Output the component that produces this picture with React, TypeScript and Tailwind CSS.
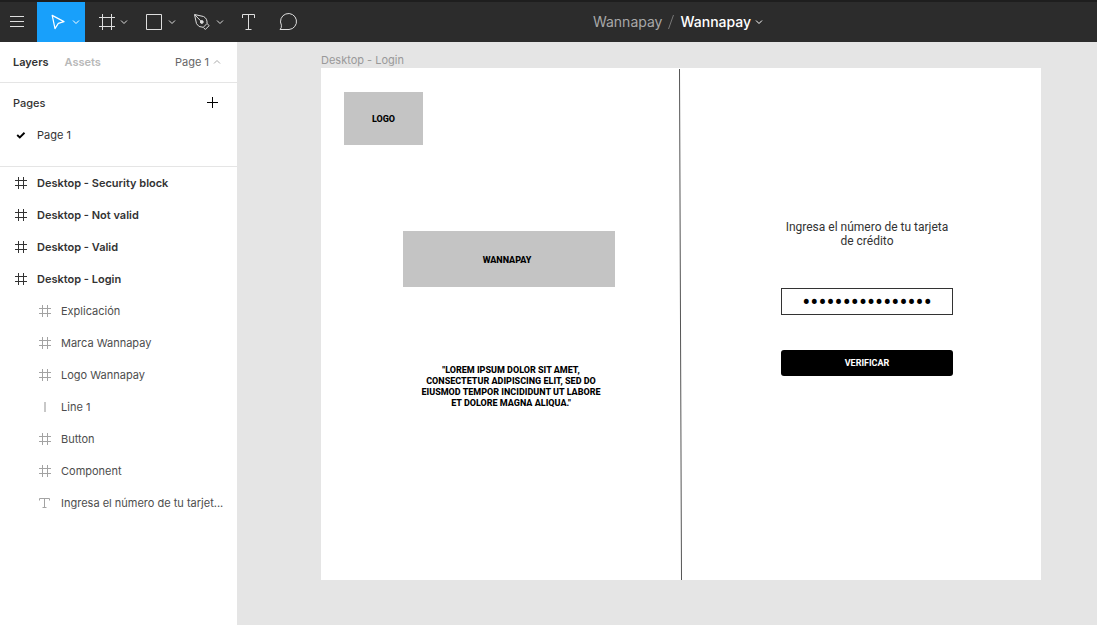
import type { ReactNode } from "react";

function Svg({ size, className = "", children }: { size: number; className?: string; children: ReactNode }) {
  return (
    <svg width={size} height={size} viewBox={`0 0 ${size} ${size}`} fill="none" stroke="currentColor" className={`shrink-0 ${className}`} aria-hidden="true">
      {children}
    </svg>
  );
}

function Chevron({ up = false, className = "" }: { up?: boolean; className?: string }) {
  return (
    <svg width="8" height="6" viewBox="0 0 8 6" fill="none" stroke="currentColor" className={`shrink-0 ${className}`} aria-hidden="true">
      <path d={up ? "M1 4.5 4 1.5 7 4.5" : "M1 1.5 4 4.5 7 1.5"} />
    </svg>
  );
}

const MoveIcon = () => (
  <Svg size={18}>
    <path d="M3.2 2.4 15 8.6 9.3 10.4 6 15.6Z" strokeWidth="1.2" strokeLinejoin="round" />
  </Svg>
);
const FrameIcon = () => (
  <Svg size={18}>
    <path d="M5.5 1v16M14.5 1v16M2 4.5h16M2 13.5h16" />
  </Svg>
);
const RectIcon = () => (
  <Svg size={18}>
    <path d="M1.5 1.5h15v15h-15z" />
  </Svg>
);
const PenIcon = () => (
  <Svg size={18}>
    <path d="M1.5 1.5 10.5 3.5Q14.5 5.5 14 10.5L10.3 14.3Q5.3 14.5 3.5 10.7ZM2 2l5.8 6M14.2 10.8l2 1.8-3.9 3.9-1.8-2" strokeLinejoin="round" />
    <circle cx="8.8" cy="9" r="1.4" fill="currentColor" />
  </Svg>
);
const TextIcon = () => (
  <Svg size={18}>
    <path d="M3.5 5V1.5h12V5M9.5 1.5v15M6.5 16.5h6" />
  </Svg>
);
const CommentIcon = () => (
  <Svg size={20}>
    <path d="M2 17.5Q3.8 16 3.4 13.2A8 8 0 1 1 11 17.5Z" strokeLinejoin="round" />
  </Svg>
);

function Tool({ label, active = false, children }: { label: string; active?: boolean; children: ReactNode }) {
  return (
    <button type="button" aria-label={label} className={`flex w-12 items-center gap-[5px] pl-3 ${active ? "bg-[#18a0fb] text-white" : "text-[#dedede]"}`}>
      {children}
      <Chevron />
    </button>
  );
}

function Toolbar() {
  return (
    <header className="flex h-[42px] shrink-0 border-t-2 border-[#1e1e1e] bg-[#2c2c2c] text-[#dedede]">
      <button type="button" aria-label="Main menu" className="flex w-[37px] items-center pl-2">
        <Svg size={18}>
          <path d="M2 3.5h14M2 8.5h14M2 13.5h14" />
        </Svg>
      </button>
      <Tool label="Move" active><MoveIcon /></Tool>
      <Tool label="Frame"><FrameIcon /></Tool>
      <Tool label="Rectangle"><RectIcon /></Tool>
      <Tool label="Pen"><PenIcon /></Tool>
      <button type="button" aria-label="Text" className="flex w-10 items-center pl-2.5"><TextIcon /></button>
      <button type="button" aria-label="Comment" className="flex w-10 items-center pl-[9px]"><CommentIcon /></button>
      <div className="flex flex-1 items-center justify-center pr-[50px] text-sm">
        <a href="#project" className="text-[#a8a8a8]">Wannapay</a>
        <Svg size={18} className="text-[#777777]">
          <path d="M6.5 16 11.5 2" />
        </Svg>
        <button type="button" className="flex items-center gap-1 font-medium text-white">
          Wannapay
          <Chevron />
        </button>
      </div>
    </header>
  );
}

type Kind = "frame" | "line" | "text";

function LayerIcon({ kind }: { kind: Kind }) {
  return (
    <Svg size={12}>
      {kind === "frame" && <path d="M3.5 0v12M8.5 0v12M0 3.5h12M0 8.5h12" />}
      {kind === "line" && <path d="M6 1v10" strokeWidth="2" opacity="0.6" />}
      {kind === "text" && <path d="M.5 3.5v-2h10v2M5.5 1.5v9M3.5 10.5h4" />}
    </Svg>
  );
}

const frames = ["Desktop - Security block", "Desktop - Not valid", "Desktop - Valid", "Desktop - Login"];
const children: { name: string; kind: Kind }[] = [
  { name: "Explicación", kind: "frame" },
  { name: "Marca Wannapay", kind: "frame" },
  { name: "Logo Wannapay", kind: "frame" },
  { name: "Line 1", kind: "line" },
  { name: "Button", kind: "frame" },
  { name: "Component", kind: "frame" },
  { name: "Ingresa el número de tu tarjet...", kind: "text" },
];

function Sidebar() {
  return (
    <aside className="flex w-[238px] shrink-0 flex-col border-r border-[#e5e5e5] bg-white text-[11px] leading-4 text-[#333333]">
      <div className="flex h-[41px] items-center gap-4 border-b border-[#e5e5e5] pr-4 pl-[13px]">
        <button type="button" className="font-semibold">Layers</button>
        <button type="button" className="font-semibold text-[#b8b8b8]">Assets</button>
        <button type="button" className="ml-auto flex items-center gap-1 text-[#666666]">
          Page 1
          <Chevron up className="text-[#aaaaaa]" />
        </button>
      </div>
      <section className="h-[84px] border-b border-[#e5e5e5] pt-1">
        <div className="flex h-8 items-center justify-between pr-[18px] pl-[13px]">
          <h2 className="font-medium">Pages</h2>
          <button type="button" aria-label="Add page" className="text-black">
            <Svg size={13}>
              <path d="M6.5 0v11M1 5.5h11" />
            </Svg>
          </button>
        </div>
        <button type="button" className="flex h-8 w-full items-center gap-2.5 pl-[15px]">
          <Svg size={12} className="text-black">
            <path d="M2.2 6 4.8 8.4 9.5 3.8" strokeWidth="1.9" />
          </Svg>
          Page 1
        </button>
      </section>
      <ul>
        {frames.map((name) => (
          <li key={name}>
            <button type="button" className="flex h-8 w-full items-center gap-2.5 pl-[15px] font-semibold">
              <LayerIcon kind="frame" />
              {name}
            </button>
          </li>
        ))}
        {children.map(({ name, kind }) => (
          <li key={name} className="text-[#a3a3a3]">
            <button type="button" className="flex h-8 w-full items-center gap-2.5 pl-[39px]">
              <LayerIcon kind={kind} />
              <span className="whitespace-nowrap text-[#4d4d4d]">{name}</span>
            </button>
          </li>
        ))}
      </ul>
    </aside>
  );
}

function LoginFrame() {
  return (
    <article className="relative grid h-[512px] w-[720px] grid-cols-2 bg-white font-[Roboto,sans-serif]">
      <div className="flex flex-col items-start pt-6 pl-[23px] text-[9px] font-extrabold text-black">
        <div className="flex h-[53px] w-[79px] items-center justify-center bg-[#c4c4c4] pt-0.5">LOGO</div>
        <div className="mt-[86px] ml-[59px] flex h-14 w-[212px] items-center justify-center bg-[#c4c4c4] pt-1 pr-1">WANNAPAY</div>
        <p className="mt-[78px] ml-[59px] w-[216px] text-center leading-[11px]">
          "LOREM IPSUM DOLOR SIT AMET,
          <br />
          CONSECTETUR ADIPISCING ELIT, SED DO
          <br />
          EIUSMOD TEMPOR INCIDIDUNT UT LABORE
          <br />
          ET DOLORE MAGNA ALIQUA."
        </p>
      </div>
      <form className="flex flex-col items-center pt-[152px] pl-3" onSubmit={(e) => e.preventDefault()}>
        <label htmlFor="card" className="text-center text-xs leading-[14px] text-[#333333]">
          Ingresa el número de tu tarjeta
          <br />
          de crédito
        </label>
        <input
          id="card"
          type="password"
          autoComplete="off"
          defaultValue="4000123412341234"
          className="mt-10 h-[27px] w-[172px] border border-[#333333] bg-white text-center text-[24px] leading-6 text-black outline-none"
        />
        <button type="submit" className="mt-[35px] h-[26px] w-[172px] rounded-[3px] bg-black pt-0.5 text-[9px] font-bold text-white">
          VERIFICAR
        </button>
      </form>
      <svg width="6" height="512" viewBox="0 0 6 512" className="absolute top-0 left-[357px]" aria-hidden="true">
        <path d="M1.5 1 3.5 512" stroke="#555555" />
      </svg>
    </article>
  );
}

export default function App() {
  return (
    <div className="flex min-h-screen flex-col font-[Inter,sans-serif]">
      <Toolbar />
      <div className="flex flex-1">
        <Sidebar />
        <main className="min-w-0 flex-1 overflow-hidden bg-[#e5e5e5] pt-2.5 pl-[83px]">
          <h1 className="h-4 text-[11px] leading-4 text-[#999999]">Desktop - Login</h1>
          <LoginFrame />
        </main>
      </div>
    </div>
  );
}
